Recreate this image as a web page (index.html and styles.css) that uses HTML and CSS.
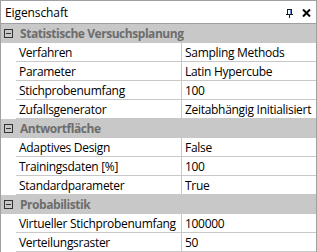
FILE: index.html
```html
<!DOCTYPE html>
<html>
<head>
	<link rel="stylesheet" href="styles.css">
</head>
	<body>
		<div class="panel">
			<div class="titlebar">
				<span class="titel">Eigenschaft</span>
				<span class="werkzeuge">
					<svg class="pin" width="7" height="9" viewBox="0 0 7 9">
						<rect x="1.5" y="0.5" width="4" height="5" fill="none" stroke="#1e1e1e"/>
						<rect x="4" y="1" width="1" height="4" fill="#5b8fd9"/>
						<rect x="0" y="5" width="7" height="1" fill="#1e1e1e"/>
						<rect x="3" y="6" width="1" height="3" fill="#1e1e1e"/>
					</svg>
					<svg class="schliessen" width="9" height="8" viewBox="0 0 9 8">
						<path d="M1 0.5 L8 7.5 M8 0.5 L1 7.5" stroke="#000" stroke-width="2"/>
					</svg>
				</span>
			</div>

			<div class="raster">
				<div class="kategorie"><span class="knopf"></span>Statistische Versuchsplanung</div>
				<div class="zeile"><div class="name">Verfahren</div><div class="wert">Sampling Methods</div></div>
				<div class="zeile"><div class="name">Parameter</div><div class="wert">Latin Hypercube</div></div>
				<div class="zeile"><div class="name">Stichprobenumfang</div><div class="wert">100</div></div>
				<div class="zeile"><div class="name">Zufallsgenerator</div><div class="wert">Zeitabhängig Initialisiert</div></div>

				<div class="kategorie"><span class="knopf"></span>Antwortfläche</div>
				<div class="zeile"><div class="name">Adaptives Design</div><div class="wert">False</div></div>
				<div class="zeile"><div class="name">Trainingsdaten [%]</div><div class="wert">100</div></div>
				<div class="zeile"><div class="name">Standardparameter</div><div class="wert">True</div></div>

				<div class="kategorie"><span class="knopf"></span>Probabilistik</div>
				<div class="zeile"><div class="name">Virtueller Stichprobenumfang</div><div class="wert">100000</div></div>
				<div class="zeile"><div class="name">Verteilungsraster</div><div class="wert">50</div></div>
			</div>
		</div>
	</body>
</html>
```

FILE: styles.css
```css
	body,
	html {
		margin: 0;
		padding: 0;
		background-color: white;
	}

	.panel {
		width: 315px;
		height: 251px;
		border: 1px solid #a0a0a0;
		border-bottom: none;
		font-family: "Open Sans", sans-serif;
		font-size: 12px;
		letter-spacing: -0.3px;
		color: black;
		overflow: hidden;
	}

	.titlebar {
		height: 22px;
		border-bottom: 1px solid #a0a0a0;
		display: flex;
		align-items: center;
		justify-content: space-between;
		padding: 0 5px 0 4px;
	}

	.titel {
		letter-spacing: -0.1px;
	}

	.werkzeuge {
		display: flex;
		align-items: center;
		gap: 9px;
		margin-top: 2px;
	}

	.kategorie {
		height: 18px;
		border-bottom: 1px solid #c8c8c8;
		background-color: #c8c8c8;
		color: #6d6d6d;
		font-weight: bold;
		letter-spacing: -0.45px;
		display: flex;
		align-items: center;
	}

	.knopf {
		width: 7px;
		height: 7px;
		border: 1px solid #333;
		margin: 0 7px 0 3px;
		position: relative;
	}

	.knopf::after {
		content: "";
		position: absolute;
		left: 1px;
		top: 3px;
		width: 5px;
		height: 1px;
		background-color: #333;
	}

	.zeile {
		height: 18px;
		display: grid;
		grid-template-columns: 165px 1fr;
		margin-left: 15px;
		background-color: white;
		border-bottom: 1px solid #c8c8c8;
	}

	.name,
	.wert {
		display: flex;
		align-items: center;
		white-space: nowrap;
		overflow: hidden;
	}

	.name {
		padding-left: 3px;
	}

	.wert {
		border-left: 1px solid #c8c8c8;
		padding-left: 3px;
	}
```
